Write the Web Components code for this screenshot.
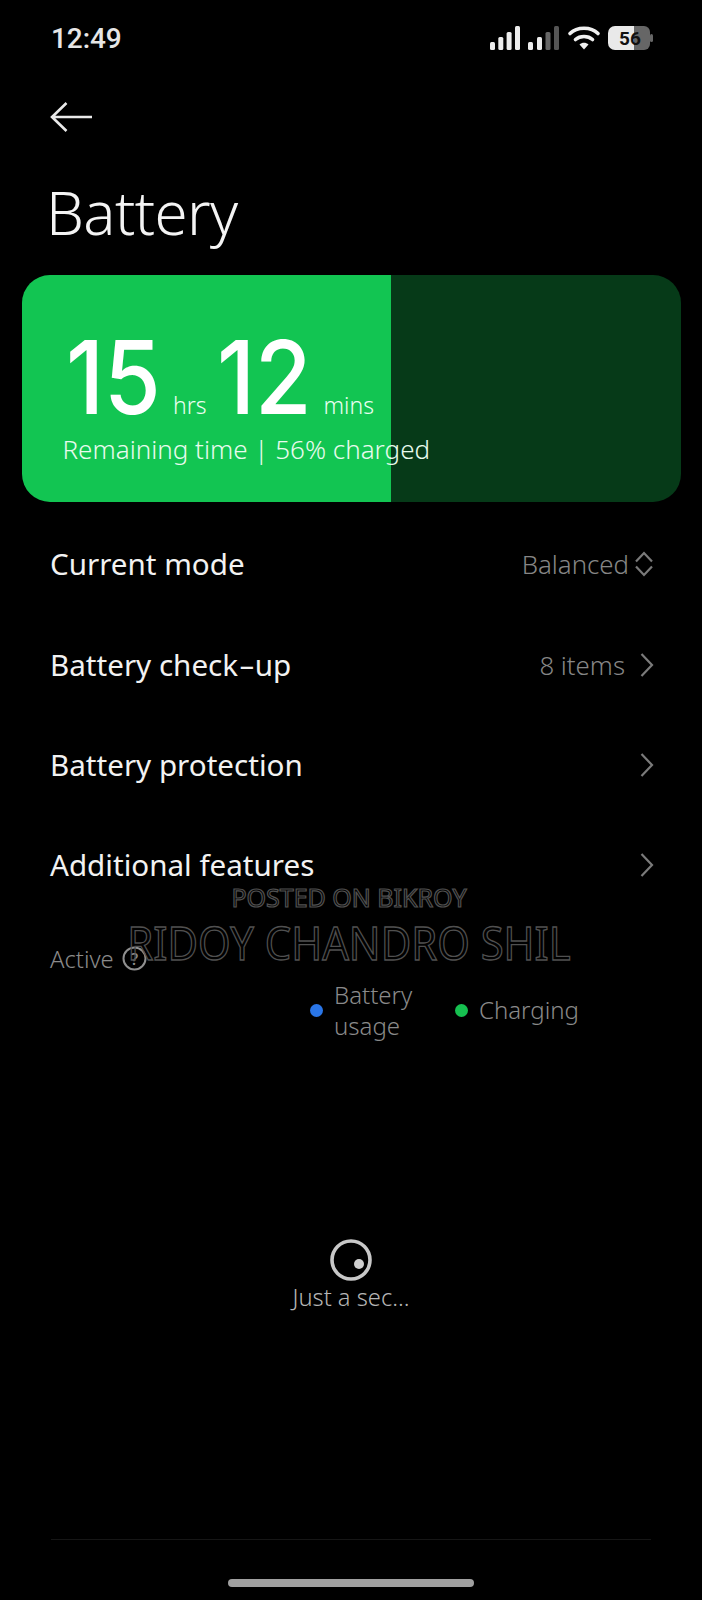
<!DOCTYPE html>
<html><head><meta charset="utf-8">
<style>
html,body{margin:0;background:#000;}
body{width:702px;height:1600px;overflow:hidden;position:relative;font-family:"Noto Sans",sans-serif;color:#fff;}
main{display:flex;flex-direction:column;height:1600px;}
</style></head><body>
<main>
<status-bar></status-bar>
<page-title>Battery</page-title>
<battery-card hours="15" mins="12">Remaining time | 56% charged</battery-card>
<settings-list>
  <setting-row label="Current mode" value="Balanced" icon="updown"></setting-row>
  <setting-row label="Battery check-up" value="8 items"></setting-row>
  <setting-row label="Battery protection"></setting-row>
  <setting-row label="Additional features"></setting-row>
</settings-list>
<active-section></active-section>
<busy-spinner>Just a sec...</busy-spinner>
<bottom-nav></bottom-nav>
</main>
<water-mark></water-mark>
<script>
function def(name, html, init){
  customElements.define(name, class extends HTMLElement{
    constructor(){super();this.attachShadow({mode:'open'});}
    connectedCallback(){this.shadowRoot.innerHTML = typeof html==='function'?html(this):html; if(init)init(this);}
  });
}
def('status-bar',`<style>
:host{display:flex;height:80px;box-sizing:border-box;padding:24px 47px 0 51px;justify-content:space-between;align-items:flex-start;}
.t{font:500 28px/30px Roboto,sans-serif;color:#e6e6e6;letter-spacing:-.1px;}
svg{display:block;margin-top:1px}
text{font:700 19px Roboto,sans-serif}
</style><div class="t">12:49</div>
<svg width="165" height="28" viewBox="0 0 165 28">
<g fill="#ececec"><rect x="0" y="17" width="5" height="8" rx="1.5"/><rect x="8.300" y="12" width="5" height="13" rx="1.5"/><rect x="16.600" y="7" width="5" height="18" rx="1.5"/><rect x="25" y="1" width="5" height="24" rx="1.5"/>
<rect x="38" y="17" width="5" height="8" rx="1.5"/><rect x="47" y="12" width="5" height="13" rx="1.5"/></g>
<rect x="55.500" y="7" width="5" height="18" rx="1.5" fill="#666"/><rect x="64" y="1" width="5" height="24" rx="1.5" fill="#555"/>
<g fill="none" stroke="#f0f0f0" stroke-width="3.600" stroke-linecap="round"><path d="M80 8.500C87 1.500 101 1.500 108 8.500"/><path d="M85.500 14.500C90 10.500 98 10.500 102.500 14.500"/></g><path d="M89.500 19.500C92 17 96 17 98.500 19.500L94 24.500z" fill="#f0f0f0"/>
<path d="M125 1h19v24h-19a7 7 0 0 1-7-7V8a7 7 0 0 1 7-7z" fill="#e9e9e9"/>
<path d="M144 1h10a6 6 0 0 1 6 6v12a6 6 0 0 1-6 6h-10z" fill="#666"/><rect x="160" y="9" width="3" height="8" rx="1.500" fill="#666"/>
<text x="129" y="19.500" fill="#111">56</text></svg>`);
def('page-title',`<style>
:host{display:block;height:195px;box-sizing:border-box;padding:0 0 0 46px;}
svg{display:block;margin:21px 0 0 4px}
.h{font:300 60px/70px "Noto Sans",sans-serif;color:#f4f4f4;margin-top:44px;letter-spacing:-.6px}
</style><svg width="44" height="32" viewBox="0 0 44 32" fill="none" stroke="#eaeaea" stroke-width="2.600"><path d="M16.500 2L2 16l14.500 14M2.500 16H42"/></svg><div class="h"><slot></slot></div>`);
def('battery-card',e=>`<style>
:host{display:block;margin:0 21px 0 21.500px;height:227px;box-sizing:border-box;border-radius:28px;padding:55px 0 0 42px;background:linear-gradient(90deg,#12c552 0,#12c552 369.500px,#063a18 369.500px);color:#fff;}
.r{display:flex;align-items:baseline;height:94px}
.n{display:inline-block;font:500 102px/94px Inter,sans-serif;transform:translateX(2px) scaleX(.9);transform-origin:0 50%;white-space:nowrap}
.u{display:inline-block;font:300 23px/30px "Noto Sans",sans-serif;color:#eafff0}
.s{font:350 26px/34px "Noto Sans",sans-serif;color:#e8fbee;margin:8px 0 0 -1px}
</style><div class="r"><span class="n" style="width:109.500px">${e.getAttribute('hours')}</span><span class="u" style="width:41.500px">hrs</span><span class="n" style="width:109px">${e.getAttribute('mins')}</span><span class="u">mins</span></div><div class="s"><slot></slot></div>`);
def('settings-list',`<style>:host{display:flex;flex-direction:column;padding:12px 48px 0 50px}</style><slot></slot>`);
const chevR=`<svg width="16" height="26" viewBox="0 0 16 26" fill="none" stroke="#7a7a7a" stroke-width="2.200"><path d="M3.500 2L14 13 3.500 24"/></svg>`;
const chevUD=`<svg width="20" height="28" viewBox="0 0 20 28" fill="none" stroke="#7a7a7a" stroke-width="2.200"><path d="M2 11.500L10 3l8 8.500M2 16.500l8 8.500 8-8.500"/></svg>`;
def('setting-row',e=>{const v=e.getAttribute('value'),ud=e.getAttribute('icon')==='updown';return `<style>
:host{display:flex;align-items:center;justify-content:space-between;height:100.400px;}
.l{font:400 29.600px/40px "Noto Sans",sans-serif;color:#f2f2f2}
.l span{display:inline-block;transform:scaleX(1.7);margin:0 3.500px}
.v{display:flex;align-items:center;gap:${ud?5:13}px;font:350 25.800px/34px "Noto Sans",sans-serif;color:#868686}
</style><div class="l">${e.getAttribute('label').replace('-','<span>-</span>')}</div><div class="v">${v?`<span>${v}</span>`:''}${ud?chevUD:chevR}</div>`});
def('active-section',`<style>
:host{display:block;height:322px;box-sizing:border-box;padding:28px 0 0 50px;position:relative}
.a{display:flex;align-items:center;gap:8px;font:350 23.800px/30px "Noto Sans",sans-serif;color:#8a8a8a;}
.lg{display:flex;align-items:center;margin:5px 0 0 260px;font:350 24px/31.500px "Noto Sans",sans-serif;color:#8a8a8a}
i{width:13px;height:13px;border-radius:50%;display:block;flex:none}
</style><div class="a"><span>Active</span><svg width="25" height="25" viewBox="0 0 25 25"><circle cx="12.500" cy="12.500" r="11" fill="none" stroke="#8f8f8f" stroke-width="2"/><text x="12.500" y="18.500" text-anchor="middle" fill="#8f8f8f" style="font:500 16px 'Noto Sans',sans-serif">?</text></svg></div>
<div class="lg"><i style="background:#2a76e8"></i><span style="margin-left:11px;width:121px">Battery<br>usage</span><i style="background:#16c050"></i><span style="margin-left:11px">Charging</span></div>`);
def('busy-spinner',`<style>
:host{display:flex;flex-direction:column;align-items:center;height:100px;margin-left:0}
.s{font:350 23.700px/30px "Noto Sans",sans-serif;color:#b5b5b5;margin-top:0}
svg{display:block}
</style><svg width="44" height="44" viewBox="0 0 44 44"><circle cx="22" cy="22" r="19" fill="none" stroke="#c8c8c8" stroke-width="3.600"/><circle cx="30" cy="26" r="5" fill="#d0d0d0"/></svg><div class="s"><slot></slot></div>`);
def('bottom-nav',`<style>
:host{display:flex;flex-direction:column;align-items:center;margin-top:auto;height:61px;box-sizing:border-box}
.d{width:600px;height:1px;background:#161616}
.h{width:246px;height:8px;border-radius:4px;background:#a0a0a0;margin-top:39px}
</style><div class="d"></div><div class="h"></div>`);
def('water-mark',`<style>
:host{position:absolute;left:0;top:880px;width:702px;display:flex;flex-direction:column;align-items:center;pointer-events:none;font-family:"Noto Sans",sans-serif;color:transparent;-webkit-text-stroke:1.2px #505050}
.a{font-size:25px;line-height:34px;transform:translateX(-2px)}
.b{font-size:41.800px;line-height:60px;margin-top:-1px;transform:translateX(-2px) scaleY(1.08)}
</style><div class="a">POSTED ON BIKROY</div><div class="b">RIDOY CHANDRO SHIL</div>`);
</script>
</body></html>
